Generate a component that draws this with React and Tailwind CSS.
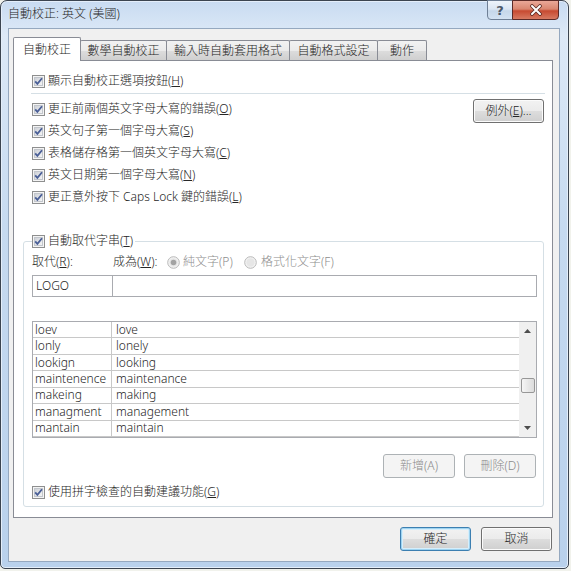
import React from "react";

const rows = [
  ["loev", "love"],
  ["lonly", "lonely"],
  ["lookign", "looking"],
  ["maintenence", "maintenance"],
  ["makeing", "making"],
  ["managment", "management"],
  ["mantain", "maintain"],
];

const tabs = [
  { label: "自動校正", w: "w-[68px]", active: true },
  { label: "數學自動校正", w: "w-[87px]" },
  { label: "輸入時自動套用格式", w: "w-[124px]" },
  { label: "自動格式設定", w: "w-[89px]" },
  { label: "動作", w: "w-[50px]" },
];

function CheckBox() {
  return (
    <svg width="13" height="13" viewBox="0 0 13 13" className="shrink-0">
      <defs>
        <linearGradient id="cbg" x1="0" y1="0" x2="1" y2="1">
          <stop offset="0" stopColor="#cbcfd5" />
          <stop offset="1" stopColor="#f7f7f7" />
        </linearGradient>
      </defs>
      <rect x="0.5" y="0.5" width="12" height="12" fill="#f4f4f4" stroke="#8e8f8f" />
      <rect x="2.5" y="2.5" width="8" height="8" fill="url(#cbg)" stroke="#c2c6cc" />
      <path d="M3.2 6.3 L5.4 8.9 L10 3.3" fill="none" stroke="#4a5f97" strokeWidth="1.8" />
    </svg>
  );
}

function Radio({ checked }) {
  return (
    <svg width="13" height="13" viewBox="0 0 13 13" className="shrink-0">
      <circle cx="6.5" cy="6.5" r="5.8" fill="#f4f4f4" stroke="#b8b8b8" />
      <circle cx="6.5" cy="6.5" r="4.2" fill="#e6e6e6" />
      {checked && <circle cx="6.5" cy="6.5" r="2.8" fill="#a3a3a3" />}
    </svg>
  );
}

function CheckRow({ children, className = "" }) {
  return (
    <div className={`flex items-center gap-[3px] ${className}`}>
      <CheckBox />
      <span className="text-[12px] leading-[16px] text-[#262626] whitespace-nowrap">{children}</span>
    </div>
  );
}

function Button({ children, className = "", primary, disabled }) {
  let look =
    "border-[#707070] text-[#262626] bg-[linear-gradient(180deg,#f2f2f2_0%,#ebebeb_50%,#dddddd_50%,#cfcfcf_100%)] shadow-[inset_0_0_0_1px_#fbfbfb]";
  if (primary)
    look =
      "border-[#3c7fb1] text-[#262626] bg-[linear-gradient(180deg,#f2f2f2_0%,#ebebeb_50%,#dddddd_50%,#cfcfcf_100%)] shadow-[inset_0_0_0_1px_#9ed3f0,inset_0_0_0_2px_#d6eefb]";
  if (disabled) look = "border-[#adb2b5] text-[#8a8a8a] bg-[#f4f4f4]";
  return (
    <div
      className={`flex items-center justify-center h-[24px] rounded-[3px] border text-[12px] leading-[16px] ${look} ${className}`}
    >
      {children}
    </div>
  );
}

export default function App() {
  return (
    <div className="w-[571px] h-[571px] bg-[#f1f2ec] font-light font-['Noto_Sans','Noto_Sans_CJK_TC',sans-serif]">
      <div className="w-[569px] h-[569px] flex flex-col rounded-t-[7px] rounded-b-[5px] border border-[#3b4450] bg-[linear-gradient(180deg,#c8dbf1_0%,#dde9f7_6%,#c6daf0_40%,#b9d1ec_100%)] shadow-[inset_0_0_0_1px_#e4eefa] pl-[7px] pr-[8px] pb-[6px]">
        {/* title bar */}
        <div className="h-[27px] flex justify-between items-start shrink-0">
          <div className="mt-[5px] text-[12px] leading-[16px] text-[#262626]">自動校正: 英文 (美國)</div>
          <div className="flex -mt-[1px] mr-[1px]">
            <div className="w-[26px] h-[20px] flex items-center justify-center rounded-bl-[4px] border border-[#6f8096] bg-[linear-gradient(180deg,#eef4fb_0%,#dbe6f3_45%,#c6d7ea_55%,#d3e2f2_100%)] text-[13px] leading-none font-bold text-[#4c5868] font-['DejaVu_Sans',sans-serif]">
              ?
            </div>
            <div className="w-[47px] h-[20px] -ml-[1px] flex items-center justify-center rounded-br-[4px] border border-[#5b2a27] bg-[linear-gradient(180deg,#eaa898_0%,#d98670_45%,#c74a31_55%,#d77a62_100%)]">
              <svg width="14" height="12" viewBox="0 0 14 12">
                <path d="M3 2 L11 10 M11 2 L3 10" stroke="#5a2a24" strokeWidth="3.6" strokeLinecap="round" />
                <path d="M3 2 L11 10 M11 2 L3 10" stroke="#ffffff" strokeWidth="2" strokeLinecap="round" />
              </svg>
            </div>
          </div>
        </div>

        {/* client area */}
        <div className="flex-1 flex flex-col bg-[#f0f0f0] border border-[#95a8bf]">
          <div className="flex items-end h-[23px] mt-[8px] ml-[4px] relative z-10">
            {tabs.map((t, i) =>
              t.active ? (
                <div
                  key={i}
                  className={`${t.w} h-[24px] -mb-[1px] bg-white border border-b-0 border-[#898c95] rounded-t-[2px] flex items-center justify-center text-[12px] leading-[16px] text-[#262626]`}
                >
                  {t.label}
                </div>
              ) : (
                <div
                  key={i}
                  className={`${t.w} h-[20px] -ml-[1px] border border-b-0 border-[#898c95] rounded-t-[2px] bg-[linear-gradient(180deg,#f2f2f2_0%,#ebebeb_50%,#dddddd_50%,#cfcfcf_100%)] flex items-center justify-center text-[12px] leading-[16px] text-[#262626]`}
                >
                  {t.label}
                </div>
              )
            )}
          </div>

          {/* panel */}
          <div className="w-[540px] h-[458px] ml-[4px] bg-white border border-[#898c95] pl-[18px] pt-[9px] flex flex-col">
            <CheckRow className="h-[22px]">
              顯示自動校正選項按鈕(<u>H</u>)
            </CheckRow>
            <div className="mt-[1px] -ml-[1px] w-[514px] h-px bg-[#d5dfe5]" />
            <div className="flex mt-[4px]">
              <div className="flex flex-col flex-1">
                <CheckRow className="h-[22px]">更正前兩個英文字母大寫的錯誤(<u>O</u>)</CheckRow>
                <CheckRow className="h-[22px]">英文句子第一個字母大寫(<u>S</u>)</CheckRow>
                <CheckRow className="h-[22px]">表格儲存格第一個英文字母大寫(<u>C</u>)</CheckRow>
                <CheckRow className="h-[22px]">英文日期第一個字母大寫(<u>N</u>)</CheckRow>
                <CheckRow className="h-[22px]">更正意外按下 Caps Lock 鍵的錯誤(<u>L</u>)</CheckRow>
              </div>
              <Button className="w-[71px] mt-[1px] mr-[8px]">
                例外(<u>E</u>)...
              </Button>
            </div>

            {/* group box */}
            <fieldset className="mt-[25px] -ml-[9px] w-[521px] border border-[#d5dfe5] rounded-[3px] pl-[8px] pb-[6px]">
              <legend className="px-0">
                <CheckRow className="h-[16px] pr-[2px]">
                  自動取代字串(<u>T</u>)
                </CheckRow>
              </legend>
              <div className="flex items-center h-[16px] mt-[5px] text-[12px] leading-[16px] text-[#262626]">
                <span className="w-[81px]">
                  取代(<u>R</u>):
                </span>
                <span className="w-[54px]">
                  成為(<u>W</u>):
                </span>
                <Radio checked />
                <span className="ml-[3px] w-[61px] text-[#8d8d8d]">純文字(P)</span>
                <Radio />
                <span className="ml-[4px] text-[#8d8d8d]">格式化文字(F)</span>
              </div>
              <div className="flex mt-[5px] w-[505px] h-[22px] text-[12px] leading-[16px] text-[#262626]">
                <div className="w-[81px] h-full border border-[#a9abb0] flex items-center pl-[3px]">LOGO</div>
                <div className="flex-1 h-full border border-l-0 border-[#a9abb0]" />
              </div>

              {/* list */}
              <div className="flex mt-[24px] w-[505px] h-[117px] border border-[#a9abb0] text-[12px] leading-[16px] text-[#262626]">
                <div className="flex-1 flex flex-col">
                  {rows.map(([a, b]) => (
                    <div key={a} className="flex h-[16.43px] border-b border-[#c8c8c8]">
                      <div className="w-[79px] border-r border-[#c8c8c8] pl-[2px] flex items-center">{a}</div>
                      <div className="flex-1 pl-[4px] flex items-center">{b}</div>
                    </div>
                  ))}
                </div>
                <div className="w-[17px] bg-[#f0f0f0] flex flex-col items-center justify-between py-[7px]">
                  <svg width="7" height="4" viewBox="0 0 7 4">
                    <path d="M0 4 L3.5 0 L7 4 Z" fill="#4d4d4d" />
                  </svg>
                  <div className="w-[14px] h-[15px] mt-[28px] -mb-[10px] rounded-[2px] border border-[#979797] bg-[linear-gradient(90deg,#f6f6f6_0%,#e8e8e8_50%,#dcdcdc_100%)]" />
                  <svg width="7" height="4" viewBox="0 0 7 4" className="mt-[26px]">
                    <path d="M0 0 L7 0 L3.5 4 Z" fill="#4d4d4d" />
                  </svg>
                </div>
              </div>

              <div className="flex justify-end gap-[9px] mt-[16px] w-[504px]">
                <Button disabled className="w-[72px]">新增(A)</Button>
                <Button disabled className="w-[72px]">刪除(D)</Button>
              </div>

              <CheckRow className="h-[16px] mt-[6px]">
                使用拼字檢查的自動建議功能(<u>G</u>)
              </CheckRow>
            </fieldset>
          </div>

          <div className="flex justify-end gap-[10px] mt-[9px] mr-[7px]">
            <Button primary className="w-[71px]">確定</Button>
            <Button className="w-[71px]">取消</Button>
          </div>
        </div>
      </div>
    </div>
  );
}
